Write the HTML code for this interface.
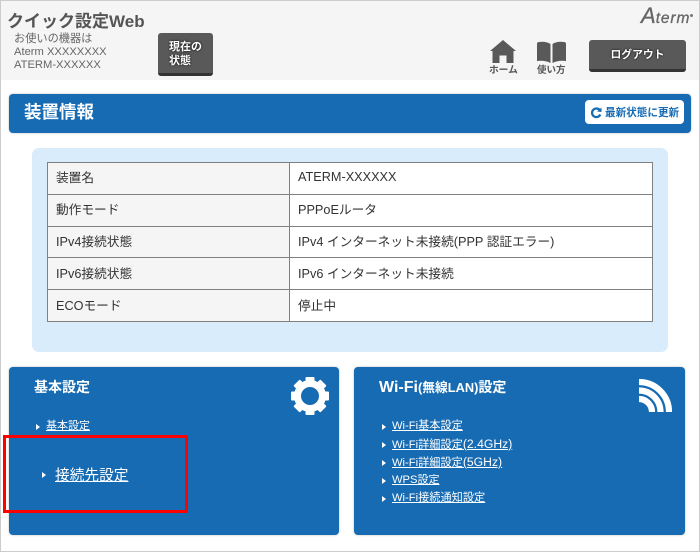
<!DOCTYPE html>
<html lang="ja">
<head>
<meta charset="utf-8">
<style>
html,body{margin:0;padding:0;width:700px;height:552px;overflow:hidden;background:#fff}
body{position:relative;font-family:"Liberation Sans","Noto Sans CJK JP",sans-serif;color:#333}
.a{position:absolute;white-space:nowrap}
.frame{left:0;top:0;width:698px;height:550px;border:1px solid #ccc}
.hdr{left:1px;top:1px;width:698px;height:79px;background:#f5f5f5}
.btn{background:#595959;border-radius:3px;border-bottom:3px solid #333;box-sizing:border-box;color:#fff;font-weight:bold;text-shadow:0 0 2px #000;text-align:center}
.blue{background:#166bb3;border-radius:4px;box-shadow:0 0 2px #bbb}
table{position:absolute;left:47px;top:162px;width:606px;height:160px;border-collapse:collapse;table-layout:fixed;font-size:12.700px;color:#333;background:#fff}
td{border:1px solid #808080;padding:0 0 3px 8px;height:30px;box-sizing:border-box}
td:first-child{background:#f5f5f5;width:242px}
.lnk{color:#fff;text-decoration:underline;font-size:11.200px;line-height:18px}
.tri{width:0;height:0;border-left:4px solid #fff;border-top:3px solid transparent;border-bottom:3px solid transparent}
</style>
</head>
<body>
<div class="a frame"></div>
<div class="a hdr"></div>

<div class="a" style="left:7px;top:11px;font-size:17px;line-height:22px;font-weight:bold;color:#555">クイック設定Web</div>
<div class="a" style="left:14px;top:33px;font-size:11.200px;line-height:13px;color:#666">お使いの機器は<br>Aterm XXXXXXXX<br>ATERM-XXXXXX</div>
<div class="a btn" style="left:158px;top:33px;width:55px;height:43px;font-size:11px;line-height:14px;padding:7px 0 0 0"><div style="position:absolute;left:11px;top:7px;text-align:left">現在の<br>状態</div></div>

<div class="a" style="left:641px;top:4px;line-height:24px;color:#666;font-style:italic;font-family:'Liberation Sans',sans-serif;-webkit-text-stroke:.3px #666"><span style="font-size:22px">A</span><span style="font-size:15.500px;letter-spacing:.9px">term</span></div>
<div class="a" style="left:690px;top:14px;width:3px;height:3px;border-radius:50%;background:#777"></div>

<svg class="a" style="left:490px;top:40px" width="26" height="24" viewBox="0 0 26 24">
<path d="M13 0L26 11H23.500V23H16.500V15.500H9.500V23H2.500V11H0Z" fill="#595959"/>
</svg>
<div class="a" style="left:489px;top:65px;font-size:9.700px;line-height:12px;font-weight:bold;color:#555">ホーム</div>
<svg class="a" style="left:536px;top:41px" width="31" height="23" viewBox="0 0 31 23">
<path d="M1 3Q1 1 3 1Q10 0 14.500 3V22Q9 19 1 20Z M16.500 3Q21 0 28 1Q30 1 30 3V20Q22 19 16.500 22Z" fill="#595959"/>
</svg>
<div class="a" style="left:537px;top:65px;font-size:9.500px;line-height:12px;font-weight:bold;color:#555">使い方</div>
<div class="a btn" style="left:589px;top:40px;width:97px;height:32px;font-size:10.800px;line-height:31px">ログアウト</div>

<div class="a blue" style="left:9px;top:94px;width:682px;height:39px"></div>
<div class="a" style="left:24px;top:100px;font-size:17.500px;line-height:24px;font-weight:bold;color:#fff">装置情報</div>
<div class="a" style="left:585px;top:100px;width:99px;height:24px;background:#fff;border-radius:4px"></div>
<svg class="a" style="left:590px;top:107px" width="12" height="12" viewBox="0 0 12 12">
<path d="M10 3.500A4.300 4.300 0 1 0 10.300 7.500" fill="none" stroke="#166bb3" stroke-width="2.200"/>
<path d="M7 4.500L11.500 5V0.500Z" fill="#166bb3"/>
</svg>
<div class="a" style="left:605px;top:106px;font-size:10.600px;line-height:14px;font-weight:bold;color:#166bb3">最新状態に更新</div>

<div class="a" style="left:32px;top:148px;width:636px;height:204px;background:#d9ecfc;border-radius:7px"></div>
<table>
<tr><td>装置名</td><td>ATERM-XXXXXX</td></tr>
<tr><td>動作モード</td><td>PPPoEルータ</td></tr>
<tr><td>IPv4接続状態</td><td>IPv4 インターネット未接続(PPP 認証エラー)</td></tr>
<tr><td>IPv6接続状態</td><td>IPv6 インターネット未接続</td></tr>
<tr><td>ECOモード</td><td>停止中</td></tr>
</table>

<div class="a blue" style="left:9px;top:367px;width:330px;height:168px"></div>
<div class="a blue" style="left:354px;top:367px;width:331px;height:168px"></div>

<div class="a" style="left:34px;top:377px;font-size:14px;line-height:20px;font-weight:bold;color:#fff">基本設定</div>
<svg class="a" style="left:290px;top:376px" width="40" height="40" viewBox="-20 -20 40 40">
<g fill="#fff">
<rect x="-4.500" y="-19" width="9" height="38" rx="1"/>
<rect x="-4.500" y="-19" width="9" height="38" rx="1" transform="rotate(45)"/>
<rect x="-4.500" y="-19" width="9" height="38" rx="1" transform="rotate(90)"/>
<rect x="-4.500" y="-19" width="9" height="38" rx="1" transform="rotate(135)"/>
<circle r="16"/>
</g>
<circle r="9" fill="#166bb3"/>
</svg>
<div class="a tri" style="left:36px;top:424px"></div>
<div class="a lnk" style="left:46px;top:417px;font-size:11px">基本設定</div>
<div class="a tri" style="left:42px;top:472px"></div>
<div class="a lnk" style="left:55px;top:466px;font-size:14.700px;line-height:20px">接続先設定</div>
<div class="a" style="left:3px;top:435px;width:179px;height:72px;border:3px solid #f00"></div>

<div class="a" style="left:379px;top:376px;font-size:16px;line-height:22px;font-weight:bold;color:#fff">Wi-Fi<span style="font-size:12.800px">(無線LAN)</span><span style="font-size:14px">設定</span></div>
<svg class="a" style="left:639px;top:379px" width="33" height="33" viewBox="0 0 33 33">
<g fill="none" stroke="#fff" stroke-width="6.200">
<path d="M0 3A30 30 0 0 1 30 33"/>
<path d="M0 11.500A21.500 21.500 0 0 1 21.500 33"/>
<path d="M0 20A13 13 0 0 1 13 33"/>
</g>
</svg>
<div class="a tri" style="left:382px;top:424px"></div>
<div class="a lnk" style="left:392px;top:417px">Wi-Fi基本設定</div>
<div class="a tri" style="left:382px;top:442px"></div>
<div class="a lnk" style="left:392px;top:435px">Wi-Fi詳細設定<span style="font-size:12.200px">(2.4GHz)</span></div>
<div class="a tri" style="left:382px;top:460px"></div>
<div class="a lnk" style="left:392px;top:453px">Wi-Fi詳細設定<span style="font-size:12.200px">(5GHz)</span></div>
<div class="a tri" style="left:382px;top:478px"></div>
<div class="a lnk" style="left:392px;top:471px">WPS<span style="font-size:11px">設定</span></div>
<div class="a tri" style="left:382px;top:496px"></div>
<div class="a lnk" style="left:392px;top:489px">Wi-Fi接続通知設定</div>
</body>
</html>
